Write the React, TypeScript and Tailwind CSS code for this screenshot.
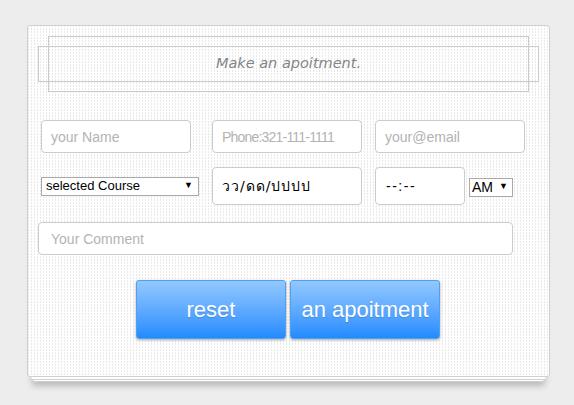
export default function App() {
  const inputBase =
    "h-[33px] w-[150px] rounded-[4px] border border-[#cccccc] bg-white px-[9px] text-[14px] text-[#222] outline-none placeholder:text-[#b3b3b3]";

  return (
    <div className="min-h-[405px] w-full bg-[#ededed] pt-[25px] pl-[27px] font-['Liberation_Sans',Arial,sans-serif]">
      <div className="relative w-[523px]">
        {/* stacked paper layers */}
        <div className="absolute left-[5px] right-[5px] top-[10px] -bottom-[5px] rounded-[3px] border border-[#cfcfcf] bg-white shadow-[0_4px_6px_rgba(0,0,0,0.22)]" />
        <div className="absolute left-[3px] right-[3px] top-[6px] -bottom-[3px] rounded-[3px] border border-[#d2d2d2] bg-white" />

        <div className="relative h-[352px] rounded-[3px] border border-[#d0d0d0] bg-white bg-[repeating-linear-gradient(0deg,#ffffff_0_1px,transparent_1px_3px),repeating-linear-gradient(90deg,#e8e8e8_0_1px,transparent_1px_3px)]">
          <div className="relative mx-[20px] mt-[10px] flex h-[56px] items-center justify-center border border-[#cbcbcb]">
            <div className="absolute -left-[11px] -right-[11px] top-[9px] bottom-[9px] border border-[#cbcbcb]" />
            <span className="relative font-['DejaVu_Sans',Verdana,sans-serif] text-[14.5px] italic text-[#858585]">
              Make an apoitment.
            </span>
          </div>

          <div className="ml-[13px] mt-[28px] flex items-center">
            <input className={inputBase} placeholder="your Name" />
            <input className={`${inputBase} ml-[21px] tracking-[-0.8px]`} placeholder="Phone:321-111-1111" />
            <input className={`${inputBase} ml-[13px]`} placeholder="your@email" />
          </div>

          <div className="ml-[13px] mt-[14px] flex items-center">
            <div className="flex h-[19px] w-[158px] items-center justify-between border border-[#a9a9a9] bg-white pl-[4px] pr-[5px] text-[13px] text-black">
              <span>selected Course</span>
              <span className="text-[9px]">▼</span>
            </div>
            <div className="ml-[13px] flex h-[38px] w-[150px] items-center rounded-[4px] border border-[#cccccc] bg-white px-[9px] font-['DejaVu_Sans','Noto_Sans',sans-serif] text-[14px] tracking-[1px] text-black">
              วว/ดด/ปปปป
            </div>
            <div className="ml-[13px] flex h-[38px] w-[90px] items-center rounded-[4px] border border-[#cccccc] bg-white px-[10px] text-[14px] tracking-[1.5px] text-black">
              --:--
            </div>
            <div className="ml-[4px] mt-[2px] flex h-[19px] w-[44px] items-center justify-between border border-[#a9a9a9] bg-white pl-[2px] pr-[4px] text-[14px] text-black">
              <span>AM</span>
              <span className="text-[9px]">▼</span>
            </div>
          </div>

          <div className="ml-[10px] mt-[17px]">
            <input
              className="h-[33px] w-[475px] rounded-[4px] border border-[#cccccc] bg-white px-[12px] text-[14px] outline-none placeholder:text-[#b3b3b3]"
              placeholder="Your Comment"
            />
          </div>

          <div className="ml-[108px] mt-[25px] flex gap-[4px]">
            <button className="h-[59px] w-[150px] rounded-[3px] border border-[#4f9ff5] bg-gradient-to-b from-[#92c8ff] to-[#1f8bff] text-[22px] text-white shadow-[0_1px_3px_rgba(0,0,0,0.35)] [text-shadow:0_1px_1px_rgba(0,0,0,0.15)]">
              reset
            </button>
            <button className="h-[59px] w-[150px] rounded-[3px] border border-[#4f9ff5] bg-gradient-to-b from-[#92c8ff] to-[#1f8bff] text-[22px] text-white shadow-[0_1px_3px_rgba(0,0,0,0.35)] [text-shadow:0_1px_1px_rgba(0,0,0,0.15)]">
              an apoitment
            </button>
          </div>
        </div>
      </div>
    </div>
  );
}
